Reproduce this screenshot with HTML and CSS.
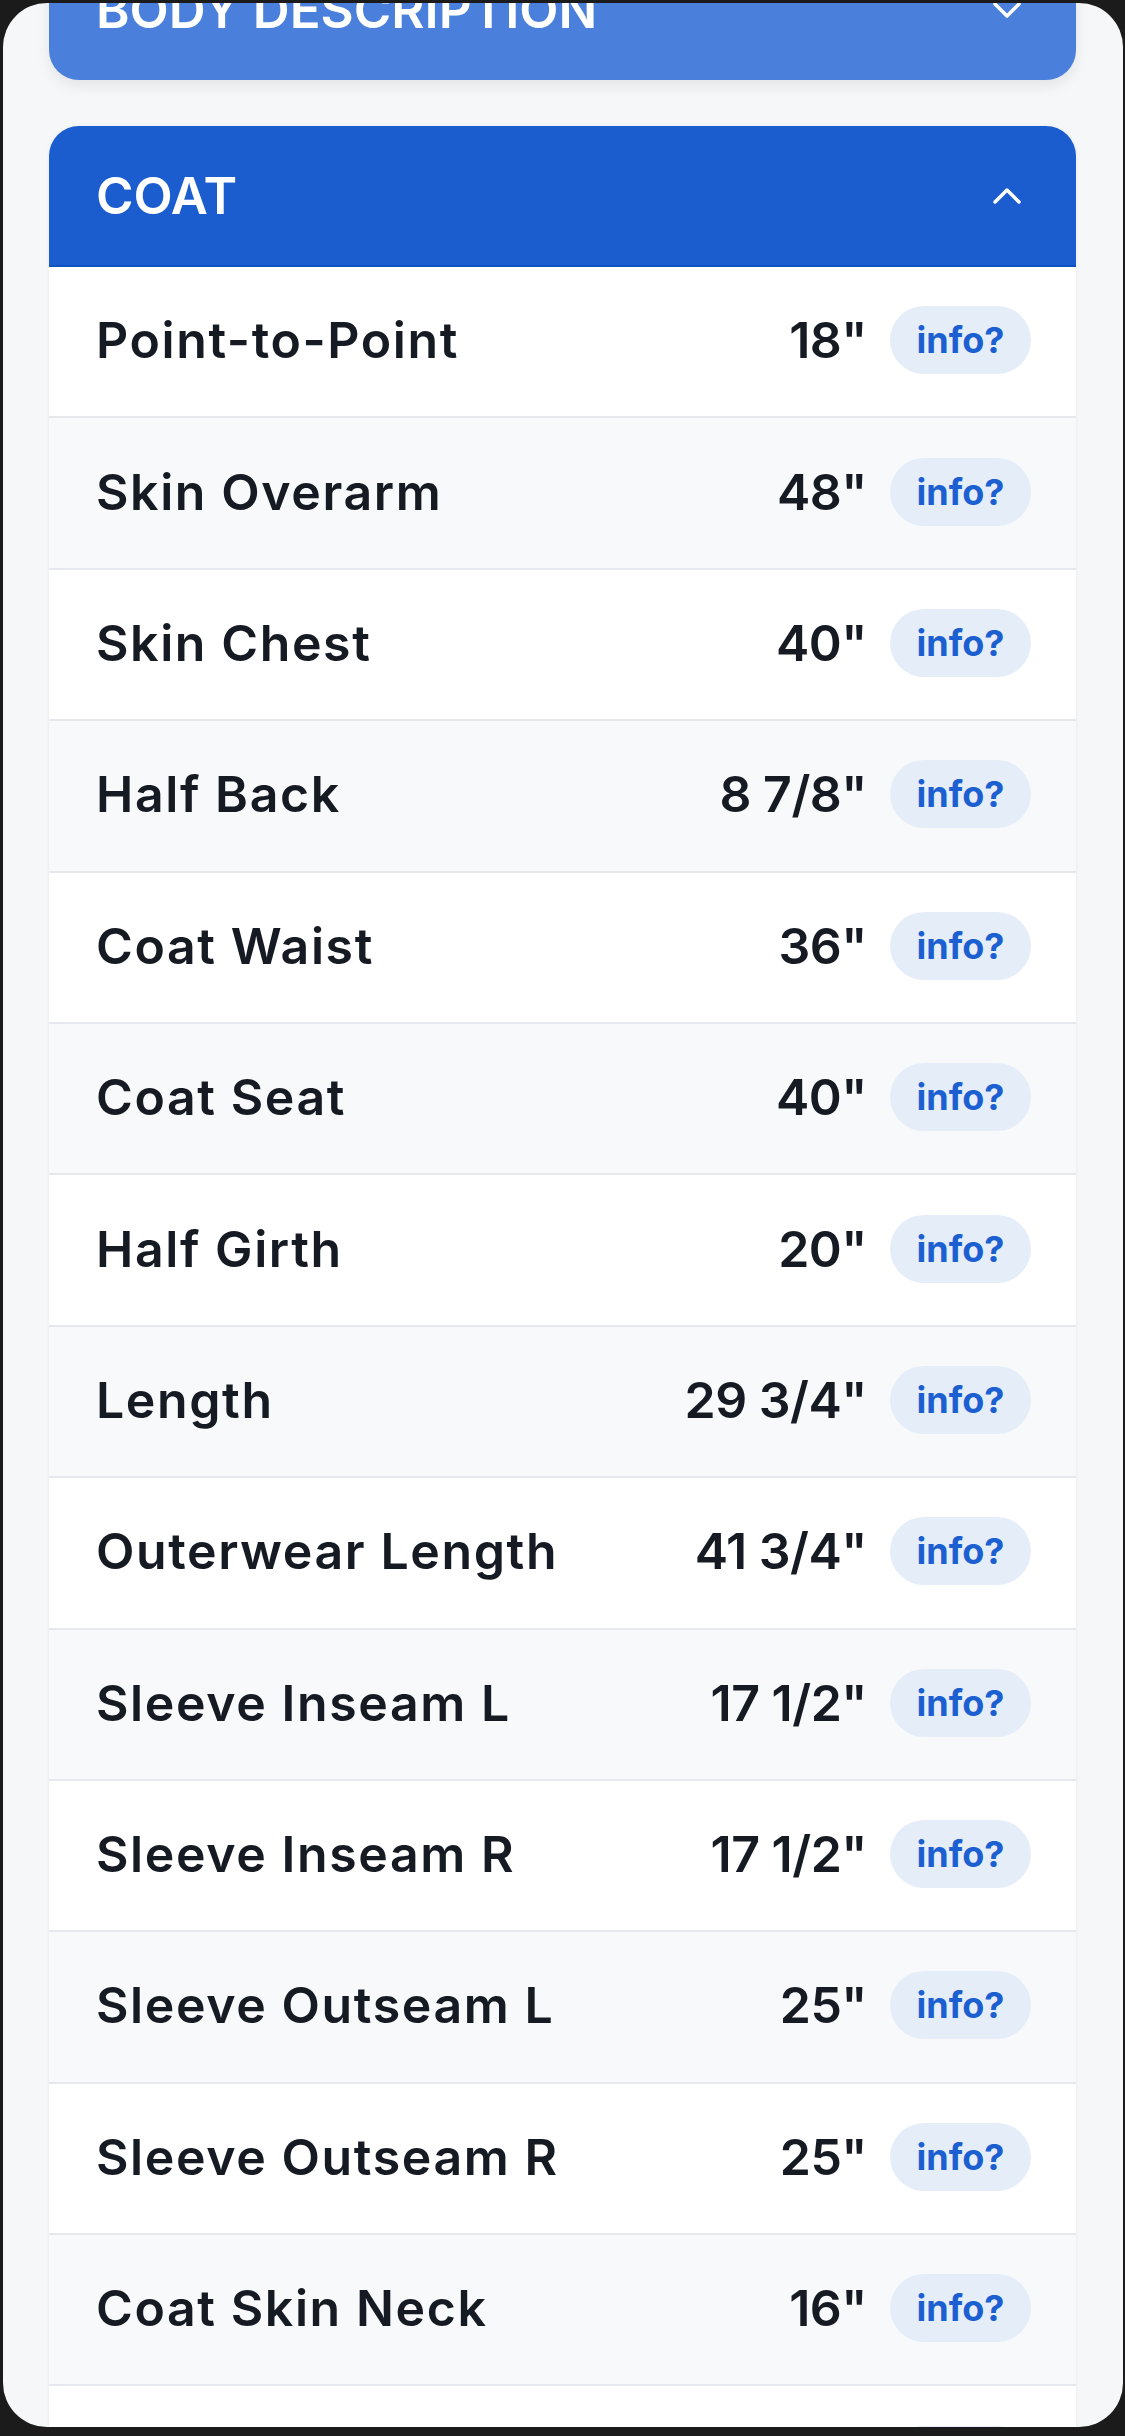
FILE: index.html
```html
<!DOCTYPE html>
<html lang="en">
<head>
    <meta charset="UTF-8">
    <meta name="viewport" content="width=device-width, initial-scale=1.0">
    <title>Measurements</title>
    <link rel="stylesheet" href="styles.css">
</head>
<body>
    <div class="screen">
        <div class="content">
            <section class="group collapsed">
                <div class="group-header">
                    <span>BODY DESCRIPTION</span>
                    <svg class="chevron" viewBox="0 0 28 16"><polyline points="2,2 14,14 26,2"/></svg>
                </div>
            </section>

            <section class="group open">
                <div class="group-header">
                    <span>COAT</span>
                    <svg class="chevron" viewBox="0 0 28 16"><polyline points="2,14 14,2 26,14"/></svg>
                </div>
                <div class="rows">
                    <div class="row"><span class="label">Point-to-Point</span><span class="value">18"</span><button class="info">info?</button></div>
                    <div class="row"><span class="label">Skin Overarm</span><span class="value">48"</span><button class="info">info?</button></div>
                    <div class="row"><span class="label">Skin Chest</span><span class="value">40"</span><button class="info">info?</button></div>
                    <div class="row"><span class="label">Half Back</span><span class="value">8 7/8"</span><button class="info">info?</button></div>
                    <div class="row"><span class="label">Coat Waist</span><span class="value">36"</span><button class="info">info?</button></div>
                    <div class="row"><span class="label">Coat Seat</span><span class="value">40"</span><button class="info">info?</button></div>
                    <div class="row"><span class="label">Half Girth</span><span class="value">20"</span><button class="info">info?</button></div>
                    <div class="row"><span class="label">Length</span><span class="value">29 3/4"</span><button class="info">info?</button></div>
                    <div class="row"><span class="label">Outerwear Length</span><span class="value">41 3/4"</span><button class="info">info?</button></div>
                    <div class="row"><span class="label">Sleeve Inseam L</span><span class="value">17 1/2"</span><button class="info">info?</button></div>
                    <div class="row"><span class="label">Sleeve Inseam R</span><span class="value">17 1/2"</span><button class="info">info?</button></div>
                    <div class="row"><span class="label">Sleeve Outseam L</span><span class="value">25"</span><button class="info">info?</button></div>
                    <div class="row"><span class="label">Sleeve Outseam R</span><span class="value">25"</span><button class="info">info?</button></div>
                    <div class="row"><span class="label">Coat Skin Neck</span><span class="value">16"</span><button class="info">info?</button></div>
                    <div class="row"><span class="label">Shoulder Width</span><span class="value">18 1/2"</span><button class="info">info?</button></div>
                </div>
            </section>
        </div>
    </div>
</body>
</html>
```

FILE: styles.css
```css
body {
    margin: 0;
    background-color: #1b1b1b;
    font-family: 'Inter', 'Noto Sans', sans-serif;
}
.screen {
    margin: 3px 2px 0 3px;
    height: 2424px;
    border-radius: 44px;
    background-color: #f6f7f9;
    overflow: hidden;
}
.content {
    margin-top: -64px;
    padding: 0 47px 0 46px;
}
.group {
    margin-bottom: 46px;
}
.group-header {
    height: 141px;
    box-sizing: border-box;
    display: flex;
    align-items: center;
    justify-content: space-between;
    padding: 0 55px 0 47px;
    color: #fff;
    font-size: 51px;
    font-weight: 600;
}
.collapsed .group-header {
    background-color: #4a80db;
    border-radius: 30px;
    box-shadow: 0 6px 14px rgba(0, 0, 0, 0.08);
}
.open {
    box-shadow: 0 0 4px rgba(0, 0, 0, 0.06);
    border-radius: 30px 30px 0 0;
}
.open .group-header {
    background-color: #1b5dce;
    border-radius: 30px 30px 0 0;
    border-bottom: 2px solid #0f52c4;
}
.chevron {
    width: 28px;
    height: 16px;
    fill: none;
    stroke: #fff;
    stroke-width: 3.5;
    stroke-linecap: round;
    stroke-linejoin: round;
}
.row {
    height: 151.4px;
    box-sizing: border-box;
    display: flex;
    align-items: center;
    padding: 0 45px 3px 47px;
    background-color: #fff;
    border-bottom: 2px solid #e6e8ec;
    color: #161a22;
    font-size: 50px;
    font-weight: 600;
}
.row:nth-child(even) {
    background-color: #f8f9fa;
}
.label {
    flex: 1;
    letter-spacing: 1.6px;
}
.value {
    letter-spacing: -0.5px;
}
.info {
    margin-left: 23px;
    width: 141px;
    height: 68px;
    border: none;
    border-radius: 34px;
    background-color: #e5edf9;
    color: #1b5fd0;
    font-family: 'Inter', sans-serif;
    font-size: 36px;
    font-weight: 700;
    padding: 0;
}
```
